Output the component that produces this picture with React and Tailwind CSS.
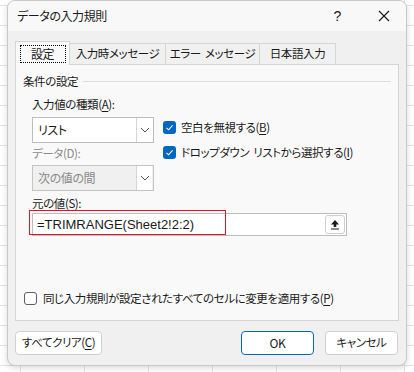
import React from "react";

const jp = "font-['Noto_Sans_CJK_JP','Noto_Sans',sans-serif] [font-feature-settings:'palt'] tracking-[-0.4px]";

function Check({ on = true }) {
  if (!on) {
    return <span className="w-[13px] h-[13px] rounded-[3px] border border-[#5f5f5f] bg-white shrink-0" />;
  }
  return (
    <span className="w-[13px] h-[13px] rounded-[3px] bg-[#0067c0] flex items-center justify-center shrink-0">
      <svg width="9" height="9" viewBox="0 0 9 9">
        <path d="M1.5 4.8 L3.6 6.8 L7.6 2.4" fill="none" stroke="white" strokeWidth="1.1" />
      </svg>
    </span>
  );
}

function Chevron({ color = "#555" }) {
  return (
    <svg width="10" height="6" viewBox="0 0 10 6">
      <path d="M1 1 L5 5 L9 1" fill="none" stroke={color} strokeWidth="1" />
    </svg>
  );
}

function Select({ value, disabled }) {
  return (
    <div
      className={`w-[122px] h-[26px] border ${disabled ? "border-[#c4c4c4] bg-[#f0f0f0] text-[#8a8a8a]" : "border-[#bdbdbd] bg-white text-[#1a1a1a]"} flex items-center`}
    >
      <span className="flex-1 pl-[5px] text-[12px]">{value}</span>
      <span className="w-[16px] h-[24px] border-l border-[#d4d4d4] bg-white flex items-center justify-center mr-[1px]">
        <Chevron />
      </span>
    </div>
  );
}

function U({ children }) {
  return <span className="underline underline-offset-2">{children}</span>;
}

export default function App() {
  return (
    <div
      className={`w-[414px] h-[372px] overflow-hidden bg-white bg-[linear-gradient(to_right,#e3e3e3_1px,transparent_1px),linear-gradient(to_bottom,#e3e3e3_1px,transparent_1px)] bg-[size:64px_20px] bg-[position:20px_5px] ${jp}`}
    >
      <div className="ml-[7px] w-[400px] h-[366px] rounded-[8px] border border-[#c8c8c8] bg-[#f0f0f0] shadow-[0_2px_6px_rgba(0,0,0,0.15)] overflow-hidden flex flex-col text-[#1a1a1a] text-[11.5px]">
        {/* title bar */}
        <div className="h-[30px] bg-[#f8f8f8] flex items-center shrink-0">
          <span className="pl-[9px] text-[12px]">データの入力規則</span>
          <span className="ml-auto mr-[37px] text-[14px] font-['Liberation_Sans',sans-serif]">?</span>
          <svg width="12" height="12" viewBox="0 0 12 12" className="mr-[16px]">
            <path d="M1 1 L11 11 M11 1 L1 11" stroke="#1a1a1a" strokeWidth="1.1" />
          </svg>
        </div>

        {/* tabs */}
        <div className="pl-[7px] pt-[9px] flex items-end h-[33px] shrink-0">
          <div className="w-[55px] h-[24px] bg-[#f9f9f9] border border-b-0 border-[#d5d5d5] flex items-center justify-center relative z-10 -mb-px">
            <span className="w-[46px] h-[18px] border border-dotted border-black flex items-center justify-center text-[12px]">設定</span>
          </div>
          <div className="w-[96px] h-[21px] border border-l-0 border-b-0 border-[#d5d5d5] flex items-center justify-center">入力時メッセージ</div>
          <div className="w-[94px] h-[21px] border border-l-0 border-b-0 border-[#d5d5d5] flex items-center justify-center">
            エラー<span className="ml-[4px]">メッセージ</span>
          </div>
          <div className="w-[76px] h-[21px] border border-l-0 border-b-0 border-[#d5d5d5] flex items-center justify-center">日本語入力</div>
        </div>

        {/* panel */}
        <div className="ml-[7px] w-[384px] h-[257px] bg-[#f9f9f9] border border-[#d5d5d5] shrink-0">
          <div className="flex items-center pl-[7px] pr-[7px] mt-[8px]">
            <span>条件の設定</span>
            <span className="flex-1 h-px bg-[#dcdcdc] ml-[5px]" />
          </div>

          <div className="flex pl-[16px] mt-[6px]">
            <div className="w-[122px]">
              <div className="h-[17px] leading-[17px]">入力値の種類(<U>A</U>):</div>
              <div className="mt-[4px]">
                <Select value="リスト" />
              </div>
              <div className="h-[17px] leading-[17px] mt-[2px] text-[#8a8a8a]">データ(D):</div>
              <div className="mt-[3px]">
                <Select value="次の値の間" disabled />
              </div>
            </div>
            <div className="ml-[9px] pt-[25px] flex flex-col gap-[12px]">
              <div className="flex items-center gap-[5px] h-[13px]">
                <Check />
                <span>空白を無視する(<U>B</U>)</span>
              </div>
              <div className="flex items-center gap-[5px] h-[13px]">
                <Check />
                <span>
                  ドロップダウン<span className="ml-[4px]">リストから選択する(<U>I</U>)</span>
                </span>
              </div>
            </div>
          </div>

          <div className="pl-[16px] mt-[4px] h-[17px] leading-[17px]">元の値(<U>S</U>):</div>
          <div className="ml-[16px] mt-[1px] w-[315px] h-[23px] border border-[#bdbdbd] bg-white flex items-center relative">
            <div className="absolute left-[-4px] top-[-4px] w-[197px] h-[25px] border border-[#e81123]" />
            <span className="pl-[4px] text-[13px] tracking-normal font-['Liberation_Sans',sans-serif] text-[#1a1a1a]">=TRIMRANGE(Sheet2!2:2)</span>
            <span className="ml-auto mr-[1px] w-[20px] h-[19px] border border-[#cfcfcf] rounded-[3px] bg-white flex items-center justify-center">
              <svg width="10" height="11" viewBox="0 0 10 11">
                <path d="M5 1 L9 5.5 L6.3 5.5 L6.3 8 L3.7 8 L3.7 5.5 L1 5.5 Z" fill="#1a1a1a" />
                <path d="M1 10 L9 10" stroke="#1a1a1a" strokeWidth="1.2" />
              </svg>
            </span>
          </div>

          <div className="flex items-center gap-[6px] pl-[8px] mt-[54px]">
            <Check on={false} />
            <span>同じ入力規則が設定されたすべてのセルに変更を適用する(<U>P</U>)</span>
          </div>
        </div>

        {/* buttons */}
        <div className="flex items-center pl-[7px] pr-[8px] mt-[10px]">
          <div className="w-[87px] h-[24px] bg-white border border-[#d0d0d0] rounded-[4px] flex items-center justify-center">
            <span>すべてクリア(<U>C</U>)</span>
          </div>
          <div className="ml-auto w-[73px] h-[24px] bg-white border border-[#0067c0] rounded-[4px] flex items-center justify-center text-[12px]">OK</div>
          <div className="ml-[11px] w-[73px] h-[24px] bg-white border border-[#d0d0d0] rounded-[4px] flex items-center justify-center">キャンセル</div>
        </div>
      </div>
    </div>
  );
}
